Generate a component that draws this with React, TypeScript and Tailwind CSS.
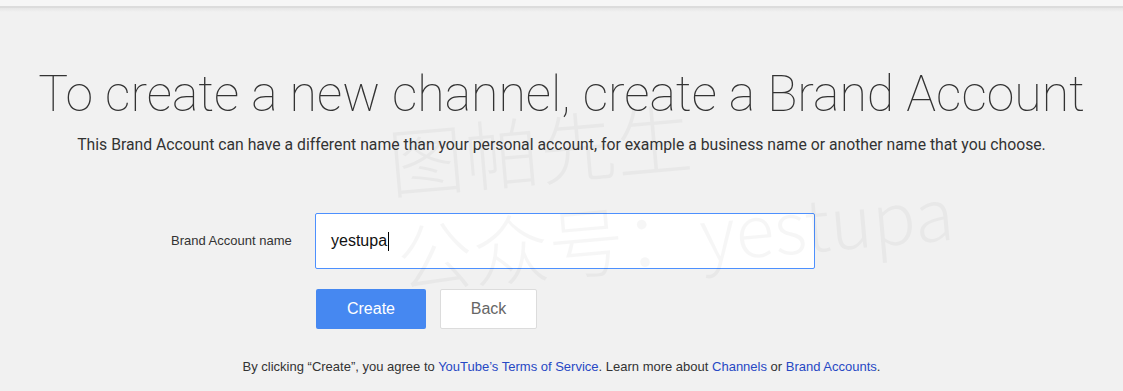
import React from "react";

export default function App() {
  return (
    <div className="relative w-[1123px] h-[391px] overflow-hidden bg-[#f1f1f1]">
      <div className="h-[6px] bg-[#f6f6f6]" />
      <div className="h-[2px] bg-[#dcdcdc]" />
      <div className="h-[4px] bg-gradient-to-b from-[#e6e6e6] to-[#f1f1f1]" />

      <h1
        className="mt-[52px] text-center text-[50px] leading-[60px] text-[#333]"
        style={{ fontFamily: "Roboto, 'Noto Sans', sans-serif", fontWeight: 100 }}
      >
        To create a new channel, create a Brand Account
      </h1>
      <p
        className="mt-[11px] text-center text-[15.75px] leading-[20px] text-[#333]"
        style={{ fontFamily: "Roboto, 'Noto Sans', sans-serif" }}
      >
        This Brand Account can have a different name than your personal account, for example a business name or another name that you choose.
      </p>

      <div
        className="mt-[58px] pl-[171px]"
        style={{ fontFamily: "'Liberation Sans', Arial, sans-serif" }}
      >
        <div className="flex items-center">
          <div className="w-[144px] text-[13px] text-[#333]">Brand Account name</div>
          <div className="w-[500px] h-[56px] rounded-[2px] border border-[#4d90fe] bg-white flex items-center pl-[15px] text-[16px] text-[#111]">
            <span>yestupa</span>
            <span className="inline-block w-px h-[19px] bg-black ml-px" />
          </div>
        </div>
        <div className="flex mt-[20px] ml-[145px] gap-[14px]">
          <div className="w-[110px] h-[40px] rounded-[2px] bg-[#4688f1] text-white text-[16px] flex items-center justify-center">
            Create
          </div>
          <div className="w-[97px] h-[40px] rounded-[2px] bg-white border border-[#dcdcdc] text-[#666] text-[16px] flex items-center justify-center">
            Back
          </div>
        </div>
      </div>

      <p
        className="mt-[28px] text-center text-[13px] text-[#333]"
        style={{ fontFamily: "'Liberation Sans', Arial, sans-serif" }}
      >
        By clicking “Create”, you agree to <span className="text-[#2748c4]">YouTube’s Terms of Service</span>. Learn more about{" "}
        <span className="text-[#2748c4]">Channels</span> or <span className="text-[#2748c4]">Brand Accounts</span>.
      </p>

      <div
        className="pointer-events-none absolute left-[384px] top-[112px] z-10 rotate-[-5deg] origin-top-left text-[rgba(0,0,0,0.035)]"
        style={{ fontFamily: "'Noto Sans CJK SC', 'Noto Sans', sans-serif" }}
      >
        <div className="text-[76px] leading-[96px] whitespace-nowrap font-light">图帕先生</div>
        <div className="text-[76px] leading-[96px] whitespace-nowrap font-light">
          公众号：<span className="text-[72px]">yestupa</span>
        </div>
      </div>
    </div>
  );
}
